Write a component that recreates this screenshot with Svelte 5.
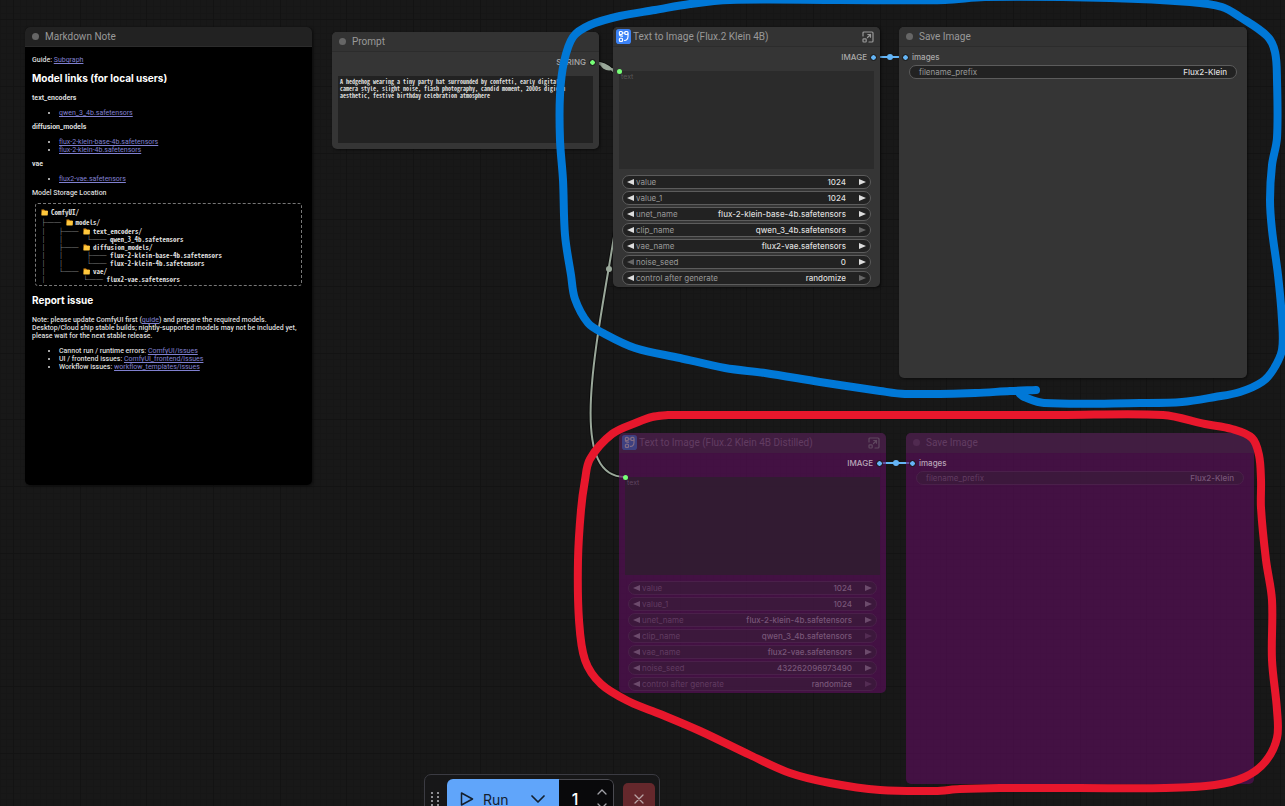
<script>
  const modelWidgets = (unet, seed, atMin) => [
    { name: 'value', value: '1024' },
    { name: 'value_1', value: '1024' },
    { name: 'unet_name', value: unet, combo: true },
    { name: 'clip_name', value: 'qwen_3_4b.safetensors', combo: true, last: true },
    { name: 'vae_name', value: 'flux2-vae.safetensors', combo: true },
    { name: 'noise_seed', value: seed, first: atMin },
    { name: 'control after generate', value: 'randomize', combo: true, last: true }
  ];

  const generators = [
    {
      id: 'base', x: 613, y: 27, title: 'Text to Image (Flux.2 Klein 4B)',
      widgets: modelWidgets('flux-2-klein-base-4b.safetensors', '0', true)
    },
    {
      id: 'distilled', x: 619, y: 433, bypassed: true, title: 'Text to Image (Flux.2 Klein 4B Distilled)',
      widgets: modelWidgets('flux-2-klein-4b.safetensors', '432262096973490', false)
    }
  ];

  const savers = [
    { id: 'save-a', x: 899, y: 27 },
    { id: 'save-b', x: 906, y: 433, bypassed: true }
  ];

  const tree = [
    { branch: '', folder: true, text: 'ComfyUI/', tall: true },
    { branch: '├── ', folder: true, text: 'models/', tall: true },
    { branch: '│   ├── ', folder: true, text: 'text_encoders/' },
    { branch: '│   │      └── ', text: 'qwen_3_4b.safetensors' },
    { branch: '│   ├── ', folder: true, text: 'diffusion_models/' },
    { branch: '│   │      ├── ', text: 'flux-2-klein-base-4b.safetensors' },
    { branch: '│   │      └── ', text: 'flux-2-klein-4b.safetensors' },
    { branch: '│   └── ', folder: true, text: 'vae/' },
    { branch: '│          └── ', text: 'flux2-vae.safetensors' }
  ];

  const prompt = [
    'A hedgehog wearing a tiny party hat surrounded by confetti, early digital',
    'camera style, slight noise, flash photography, candid moment, 2000s digicam',
    'aesthetic, festive birthday celebration atmosphere'
  ].join('\n');

  // Freehand strokes, smoothed through their sample points.
  const blue = [
    [1036, 390], [1010, 391], [975, 393], [905, 394], [880, 391], [820, 382], [765, 373], [725, 368],
    [680, 358], [635, 348], [603, 333], [588, 323], [575, 299], [571, 275], [565, 235], [563, 180],
    [560, 140], [560, 95], [564, 62], [573, 37], [590, 25], [620, 16], [655, 10], [690, 4], [730, 0],
    [840, 0], [945, 0], [985, -3], [1110, -2], [1190, 2], [1222, 7], [1240, 17], [1267, 36], [1275, 52],
    [1277, 80], [1277, 138], [1272, 165], [1270, 200], [1272, 230], [1278, 275], [1282, 320], [1282, 350],
    [1273, 370], [1262, 382], [1240, 392], [1215, 397], [1182, 402], [1140, 403], [1044, 403], [1024, 397], [1020, 394]
  ];
  const red = [
    [668, 415], [760, 415], [900, 415], [1060, 415], [1163, 415], [1205, 424], [1232, 429], [1252, 438],
    [1259, 455], [1261, 480], [1261, 508], [1266, 560], [1272, 600], [1272, 660], [1277, 710], [1277, 738],
    [1265, 762], [1245, 777], [1215, 785], [1165, 788], [1080, 788], [1000, 788], [960, 789], [935, 791],
    [880, 790], [830, 783], [790, 773], [750, 755], [700, 731], [660, 714], [630, 702], [601, 684],
    [585, 660], [579, 620], [578, 560], [581, 510], [585, 480], [590, 459], [612, 434], [638, 422], [652, 417], [668, 415]
  ];

  function smooth(points) {
    let d = `M${points[0][0]} ${points[0][1]}`;
    for (let i = 0; i < points.length - 1; i++) {
      const a = points[i - 1] ?? points[i];
      const b = points[i];
      const c = points[i + 1];
      const e = points[i + 2] ?? c;
      const len = Math.hypot(c[0] - b[0], c[1] - b[1]);
      const t1 = len / (Math.hypot(c[0] - a[0], c[1] - a[1]) || 1) / 3;
      const t2 = len / (Math.hypot(e[0] - b[0], e[1] - b[1]) || 1) / 3;
      d += `C${b[0] + (c[0] - a[0]) * t1} ${b[1] + (c[1] - a[1]) * t1} ${c[0] - (e[0] - b[0]) * t2} ${c[1] - (e[1] - b[1]) * t2} ${c[0]} ${c[1]}`;
    }
    return d;
  }
</script>

{#snippet folder()}
  <svg class="folder" viewBox="0 0 18 14" aria-hidden="true">
    <path d="M3 1h5l2 2h5v9H3z" fill="#e89a1c" />
    <path d="M4 4h12l-1 9H3z" fill="#ffc83d" />
  </svg>
{/snippet}

<main class="canvas">
  <svg class="layer" aria-hidden="true">
    <g fill="none" stroke-linecap="butt">
      <path d="M592 62C696 62 521 477 625 477" stroke="#0d0d0d" stroke-width="4" />
      <path d="M592 62C696 62 521 477 625 477M592 62C599 62 612 71 619 71" stroke="#9aa89a" stroke-width="2" />
      <path d="M873 57H906M880 463H912" stroke="#64b5f6" stroke-width="2" />
    </g>
    <path d="M600 64Q607 64 613 70Q603 72 600 64" fill="#9aa89a" />
    <circle cx="609" cy="269" r="3" fill="#9aa89a" />
    <circle cx="890" cy="57" r="3" fill="#64b5f6" />
    <circle cx="896" cy="463" r="3" fill="#64b5f6" />
  </svg>

  <article class="node note" style="left:25px;top:27px">
    <header><i class="dot"></i><h2>Markdown Note</h2></header>
    <div class="markdown">
      <p>Guide: <a href="#subgraph">Subgraph</a></p>
      <h3>Model links (for local users)</h3>
      <p class="strong">text_encoders</p>
      <ul><li><a href="#qwen">qwen_3_4b.safetensors</a></li></ul>
      <p class="strong">diffusion_models</p>
      <ul>
        <li><a href="#klein-base">flux-2-klein-base-4b.safetensors</a></li>
        <li><a href="#klein">flux-2-klein-4b.safetensors</a></li>
      </ul>
      <p class="strong">vae</p>
      <ul><li><a href="#vae">flux2-vae.safetensors</a></li></ul>
      <p>Model Storage Location</p>
      <div class="tree">
        {#each tree as row}
          <div class="branch" class:tall={row.tall}><span>{row.branch}</span>{#if row.folder}{@render folder()}{/if}<span>{row.text}</span></div>
        {/each}
      </div>
      <h3>Report issue</h3>
      <p>Note: please update ComfyUI first (<a href="#guide">guide</a>) and prepare the required models.<br />Desktop/Cloud ship stable builds; nightly-supported models may not be included yet,<br />please wait for the next stable release.</p>
      <ul>
        <li>Cannot run / runtime errors: <a href="#comfy">ComfyUI/issues</a></li>
        <li>UI / frontend issues: <a href="#frontend">ComfyUI_frontend/issues</a></li>
        <li>Workflow issues: <a href="#templates">workflow_templates/issues</a></li>
      </ul>
    </div>
  </article>

  <article class="node prompt" style="left:332px;top:32px">
    <header><i class="dot"></i><h2>Prompt</h2></header>
    <div class="slot out">STRING<i class="pin green"></i></div>
    <div class="area"><textarea aria-label="Prompt" spellcheck="false" value={prompt}></textarea></div>
  </article>

  {#each generators as node}
    <article class="node generator" class:bypassed={node.bypassed} style="left:{node.x}px;top:{node.y}px">
      <header>
        <svg class="badge" viewBox="0 0 16 16" aria-hidden="true">
          <rect x="0" y="0" width="16" height="16" rx="3" fill="#3b82f6" />
          <g fill="none" stroke="#fff" stroke-width="1.2" stroke-linecap="round" stroke-linejoin="round">
            <rect x="3.6" y="2.6" width="3.2" height="3.2" rx="1" />
            <rect x="9.4" y="2.6" width="3.4" height="3.2" rx="1" />
            <rect x="3.6" y="9.8" width="3.4" height="3.4" rx="1" />
            <path d="M6.8 4.2H9.4M3.6 5Q3.6 7.6 6 7.6H7M12.8 5V8Q12.6 12.2 9 12.2" />
          </g>
        </svg>
        <h2>{node.title}</h2>
        <button class="expand" aria-label="Open subgraph">
          <svg viewBox="0 0 12 12" fill="none" stroke="#999" stroke-width="1.2" stroke-linecap="round" stroke-linejoin="round" aria-hidden="true">
            <path d="M1 5V2Q1 1 2 1H10Q11 1 11 2V10Q11 11 10 11H7M5.5 6.5L8.5 3.5M5.8 3.5H8.5V6.2" />
            <rect x="1" y="7.8" width="3.2" height="3.2" rx=".7" />
          </svg>
        </button>
      </header>
      <div class="slot out">IMAGE<i class="pin"></i></div>
      <div class="area">
        <textarea aria-label="text" placeholder="text" disabled></textarea>
        <i class="pin green corner"></i>
      </div>
      <div class="widgets">
        {#each node.widgets as w}
          <div class="pill">
            <button disabled={w.first} aria-label="Previous {w.name}"><svg viewBox="0 0 7 6" aria-hidden="true"><path d="M7 0V6L0 3z" /></svg></button>
            <label for="{node.id}-{w.name}">{w.name}</label>
            {#if w.combo}
              <select id="{node.id}-{w.name}"><option>{w.value}</option></select>
            {:else}
              <input id="{node.id}-{w.name}" inputmode="numeric" value={w.value} />
            {/if}
            <button disabled={w.last} aria-label="Next {w.name}"><svg viewBox="0 0 7 6" aria-hidden="true"><path d="M0 0V6L7 3z" /></svg></button>
          </div>
        {/each}
      </div>
    </article>
  {/each}

  {#each savers as node}
    <article class="node saver" class:bypassed={node.bypassed} style="left:{node.x}px;top:{node.y}px">
      <header><i class="dot"></i><h2>Save Image</h2></header>
      <div class="slot"><i class="pin"></i>images</div>
      <div class="widgets">
        <div class="pill plain">
          <label for={node.id}>filename_prefix</label>
          <input id={node.id} value="Flux2-Klein" />
        </div>
      </div>
    </article>
  {/each}

  <div class="actionbar">
    <svg class="grip" viewBox="0 0 8 14" fill="#b8b8bc" aria-hidden="true">
      {#each [1, 5, 9, 13] as y}
        <circle cx="1" cy={y} r="1" /><circle cx="7" cy={y} r="1" />
      {/each}
    </svg>
    <div class="run">
      <button class="go">
        <svg viewBox="0 0 14 14" fill="none" stroke="#14202e" stroke-width="1.5" stroke-linejoin="round" aria-hidden="true"><path d="M1.5 1L12.5 7L1.5 13z" /></svg>
        Run
      </button>
      <button class="more" aria-label="Run options">
        <svg viewBox="0 0 14 8" fill="none" stroke="#14202e" stroke-width="1.7" stroke-linecap="round" stroke-linejoin="round" aria-hidden="true"><path d="M1 1L7 7L13 1" /></svg>
      </button>
      <div class="count">
        <input aria-label="Batch count" value="1" />
        <div class="steps">
          <button aria-label="Increase"><svg viewBox="0 0 10 6" aria-hidden="true"><path d="M1 5L5 1L9 5" /></svg></button>
          <button aria-label="Decrease"><svg viewBox="0 0 10 6" aria-hidden="true"><path d="M1 1L5 5L9 1" /></svg></button>
        </div>
      </div>
    </div>
    <button class="cancel" aria-label="Cancel">
      <svg viewBox="0 0 10 10" fill="none" stroke="#b9a3a4" stroke-width="1.3" stroke-linecap="round" aria-hidden="true"><path d="M1 1L9 9M9 1L1 9" /></svg>
    </button>
  </div>

  <svg class="layer ink" fill="none" stroke-width="8" stroke-linecap="round" stroke-linejoin="round" aria-hidden="true">
    <path d={smooth(blue)} stroke="#0078d7" />
    <path d={smooth(red)} stroke="#e8172c" />
  </svg>
</main>

<style>
  :global(body) {
    margin: 0;
    background: #171717;
  }
  .canvas {
    position: relative;
    height: 100vh;
    overflow: hidden;
    font-family: Inter, sans-serif;
    color: #ccc;
    background-color: #181818;
    background-image:
      linear-gradient(90deg, #131313 1px, transparent 1px, transparent 67px, #131313 67px, #131313 68px, transparent 68px, transparent 133px, #131313 133px, #131313 134px, transparent 134px),
      linear-gradient(#131313 1px, transparent 1px, transparent 67px, #131313 67px, #131313 68px, transparent 68px, transparent 133px, #131313 133px, #131313 134px, transparent 134px),
      linear-gradient(90deg, #161616 1px, transparent 1px, transparent 7px, #161616 7px, #161616 8px, transparent 8px, transparent 13px, #161616 13px, #161616 14px, transparent 14px),
      linear-gradient(#161616 1px, transparent 1px, transparent 7px, #161616 7px, #161616 8px, transparent 8px, transparent 13px, #161616 13px, #161616 14px, transparent 14px);
    background-size: 200px 200px, 200px 200px, 20px 20px, 20px 20px;
    background-position: 13px 86px, 13px 86px, 13px 6px, 13px 6px;
  }
  .layer {
    position: absolute;
    inset: 0;
    width: 100%;
    height: 100%;
    pointer-events: none;
  }
  button, input, select, textarea {
    font: inherit;
    color: inherit;
    background: none;
    border: 0;
    padding: 0;
    margin: 0;
    outline: 0;
    min-width: 0;
  }
  .node {
    position: absolute;
    display: flex;
    flex-direction: column;
    box-sizing: border-box;
    border-radius: 5px;
    background: #353535;
    box-shadow: 1px 1px 3px #0008;
  }
  .note {
    width: 287px;
    min-height: 458px;
    background: #000;
  }
  .prompt { width: 267px; }
  .generator { width: 267px; padding-bottom: 2px; }
  .saver { width: 348px; min-height: 351px; }
  header {
    display: flex;
    align-items: center;
    box-sizing: border-box;
    height: 20px;
    padding: 0 7px;
    gap: 6px;
    border-radius: 5px 5px 0 0;
    background: #333;
    border-bottom: 1px solid #2c2c2c;
  }
  .note header { background: #222; }
  .generator header { padding: 0 6px 0 3px; gap: 2px; }
  h2 {
    flex: 1;
    margin: 0;
    font-family: Roboto, sans-serif;
    font-size: 10px;
    line-height: 12px;
    font-weight: 400;
    color: #999;
    white-space: nowrap;
  }
  .dot {
    width: 7px;
    height: 7px;
    border-radius: 50%;
    background: #666;
  }
  .badge { width: 15px; height: 15px; }
  .expand { display: flex; }
  .expand svg { width: 12px; height: 12px; }
  .slot {
    display: flex;
    align-items: center;
    gap: 4px;
    height: 16px;
    padding: 2px 4px 0;
    font-size: 8px;
    font-weight: 500;
    color: #aaa;
  }
  .out { justify-content: flex-end; }
  .pin {
    width: 5px;
    height: 5px;
    border-radius: 50%;
    background: #64b5f6;
    outline: 1px solid #1c1c1c;
  }
  .green { background: #7f7; }
  .area {
    position: relative;
    display: flex;
    margin: 6px 6px 0;
  }
  .area textarea {
    flex: 1;
    height: 98px;
    box-sizing: border-box;
    padding: 2px;
    resize: none;
    background: #2b2b2b;
    font-size: 7px;
    line-height: 7px;
  }
  .area textarea::placeholder { color: #585858; opacity: 1; }
  .prompt textarea {
    height: 67px;
    background: #222;
    color: #ddd;
    font-family: "Noto Sans Mono CJK JP", "Liberation Mono", monospace;
    font-size: 6px;
    font-weight: 700;
  }
  .prompt .area { margin-bottom: 6px; }
  .corner {
    position: absolute;
    left: -2px;
    top: -2px;
    outline: 0;
  }
  .widgets {
    display: flex;
    flex-direction: column;
    gap: 2px;
    padding: 6px 9px 0;
  }
  .saver .widgets { padding: 0 10px; }
  .pill {
    display: flex;
    align-items: center;
    box-sizing: border-box;
    height: 14px;
    padding: 0 4px;
    gap: 2px;
    border: 1px solid #5c5c5c;
    border-radius: 7px;
    background: #222;
    font-size: 8px;
    line-height: 10px;
  }
  .pill label { color: #999; white-space: nowrap; }
  .pill input, .pill select {
    flex: 1;
    width: 0;
    height: 12px;
    color: #ddd;
    font-weight: 500;
    text-align: right;
    text-align-last: right;
    appearance: none;
    margin-right: 11px;
  }
  .pill button { display: flex; }
  .pill button svg { width: 7px; height: 6px; fill: #ddd; }
  .pill button:disabled svg { fill: #666; }
  .plain { padding: 0 9px; }
  .plain input { margin-right: 0; }

  .bypassed {
    background: rgba(96, 13, 96, 0.6);
    box-shadow: none;
  }
  .bypassed header {
    background: #3f2a3f80;
    border-bottom-color: transparent;
  }
  .bypassed header h2 { color: #613c61; }
  .bypassed .dot { background: #502a50; }
  .bypassed .badge { opacity: 0.35; }
  .bypassed .expand { opacity: 0.35; }
  .bypassed .slot { color: #b8a5b8; }
  .bypassed .area textarea { background: #2b202bb0; }
  .bypassed .area textarea::placeholder { color: #5f4460; }
  .bypassed .pill {
    background: #36203680;
    border-color: #4a204a;
  }
  .bypassed .pill label { color: #613b61; }
  .bypassed .pill input, .bypassed .pill select { color: #785678; }
  .bypassed .pill button svg { fill: #6c4b6c; }
  .bypassed .pill button:disabled svg { fill: #532c53; }

  .markdown {
    padding: 9px 7px;
    font-family: Roboto, sans-serif;
    font-size: 7px;
    line-height: 8px;
    font-weight: 500;
    color: #ddd;
    white-space: nowrap;
  }
  .markdown p { margin: 0; }
  .markdown .strong { font-weight: 700; }
  .markdown a { color: #8080d0; font-weight: 400; }
  .markdown h3 {
    margin: 8px 0 10px;
    font-family: Inter, sans-serif;
    font-size: 10px;
    line-height: 12px;
    font-weight: 700;
    color: #fff;
  }
  .markdown ul {
    margin: 7px 0 6px;
    padding-left: 27px;
  }
  .tree {
    margin: 6px 3px 8px;
    padding: 3px 4px 2px;
    border: 1px dashed #777;
    border-radius: 3px;
    font-family: "Noto Sans Mono CJK JP", "Liberation Mono", monospace;
    font-weight: 700;
  }
  .branch {
    display: flex;
    align-items: center;
    height: 8px;
    white-space: pre;
  }
  .tall { height: 10px; }
  .folder { width: 9px; height: 7px; margin-right: 2px; }

  .actionbar {
    position: absolute;
    left: 33%;
    bottom: -18px;
    display: flex;
    align-items: center;
    box-sizing: border-box;
    width: 236px;
    height: 50px;
    padding: 4px;
    border: 1px solid #3b3b42;
    border-radius: 7px;
    background: #171718;
  }
  .grip { width: 8px; height: 14px; margin: 0 8px 0 2px; }
  .run {
    flex: 1;
    display: flex;
    height: 40px;
    border-radius: 6px;
    overflow: hidden;
  }
  .run > button {
    display: flex;
    align-items: center;
    background: #60a5fa;
    color: #14202e;
  }
  .go { padding-left: 13px; gap: 9px; font-size: 14px; width: 70px; }
  .go svg { width: 14px; height: 14px; }
  .more { width: 42px; justify-content: center; }
  .more svg { width: 14px; height: 8px; }
  .count {
    flex: 1;
    display: flex;
    box-sizing: border-box;
    border: 1px solid #4a4a50;
    border-left: 0;
    border-radius: 0 6px 6px 0;
    background: #09090b;
  }
  .count input {
    width: 32px;
    text-align: center;
    font-size: 16px;
    font-weight: 500;
    color: #fff;
  }
  .steps {
    flex: 1;
    display: flex;
    flex-direction: column;
    justify-content: space-evenly;
    align-items: center;
  }
  .steps svg {
    display: block;
    width: 10px;
    height: 6px;
    fill: none;
    stroke: #a0a0a6;
    stroke-width: 1.3;
    stroke-linecap: round;
  }
  .cancel {
    display: flex;
    align-items: center;
    justify-content: center;
    width: 32px;
    height: 32px;
    margin-left: 9px;
    border-radius: 5px;
    background: #65282c;
  }
  .cancel svg { width: 10px; height: 10px; }
</style>
